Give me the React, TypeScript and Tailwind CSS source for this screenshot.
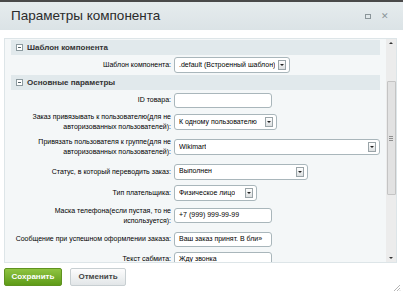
import React from 'react';

type Row =
  | { kind: 'section'; title: string }
  | { kind: 'field'; label: string[]; control: 'input' | 'select'; value: string; width: number; h: number };

const rows: Row[] = [
  { kind: 'section', title: 'Шаблон компонента' },
  { kind: 'field', label: ['Шаблон компонента:'], control: 'select', value: '.default (Встроенный шаблон)', width: 116, h: 20 },
  { kind: 'section', title: 'Основные параметры' },
  { kind: 'field', label: ['ID товара:'], control: 'input', value: '', width: 98, h: 20 },
  {
    kind: 'field',
    label: ['Заказ привязывать к пользователю(для не', 'авторизованных пользователей):'],
    control: 'select',
    value: 'К одному пользователю',
    width: 103,
    h: 24,
  },
  {
    kind: 'field',
    label: ['Привязать пользователя к группе(для не', 'авторизованных пользователей):'],
    control: 'select',
    value: 'Wikimart',
    width: 206,
    h: 26,
  },
  { kind: 'field', label: ['Статус, в который переводить заказ:'], control: 'select', value: 'Выполнен', width: 134, h: 23 },
  { kind: 'field', label: ['Тип плательщика:'], control: 'select', value: 'Физическое лицо', width: 83, h: 20 },
  {
    kind: 'field',
    label: ['Маска телефона(если пустая, то не', 'используется):'],
    control: 'input',
    value: '+7 (999) 999-99-99',
    width: 98,
    h: 25,
  },
  { kind: 'field', label: ['Сообщение при успешном оформлении заказа:'], control: 'input', value: 'Ваш заказ принят. В бли»', width: 98, h: 22 },
  { kind: 'field', label: ['Текст сабмита:'], control: 'input', value: 'Жду звонка', width: 98, h: 18 },
];

function MinusBox() {
  return (
    <span className="flex h-[7px] w-[7px] items-center justify-center border border-[#8c9a9f] bg-white">
      <span className="h-px w-[3px] bg-[#55646a]" />
    </span>
  );
}

function Control({ row }: { row: Extract<Row, { kind: 'field' }> }) {
  if (row.control === 'input') {
    return (
      <div
        className="flex h-[15px] shrink-0 items-center overflow-hidden whitespace-nowrap rounded-[3px] border border-[#a9b6bb] bg-white px-[4px] text-[7px] text-black"
        style={{ width: row.width }}
      >
        {row.value}
      </div>
    );
  }
  return (
    <div
      className="flex h-[16px] shrink-0 items-center justify-between rounded-[3px] border border-[#a9b6bb] bg-white pl-[4px] pr-[3px] text-[7px] text-black"
      style={{ width: row.width }}
    >
      <span className="overflow-hidden whitespace-nowrap">{row.value}</span>
      <span className="flex h-[10px] w-[8px] shrink-0 items-center justify-center border border-[#9aa4a8] bg-gradient-to-b from-[#ffffff] to-[#dcdfe0]">
        <span className="h-0 w-0 border-x-[2px] border-t-[2px] border-x-transparent border-t-[#222]" />
      </span>
    </div>
  );
}

export default function App() {
  return (
    <div className="relative h-[294px] w-[403px] overflow-hidden bg-white font-['Liberation_Sans',Arial,sans-serif]">
      <div className="h-[2px] bg-[#4a4a4a]" />
      <header className="flex h-[28px] items-center justify-between bg-gradient-to-b from-[#e6ecee] to-[#dbe3e6] pl-[11px] pr-[14px]">
        <span className="text-[13.5px] text-[#2b2b2b]">Параметры компонента</span>
        <div className="flex items-center gap-[10px] text-[#8a9599]">
          <span className="h-[5px] w-[6px] border border-[#8a9599]" />
          <span className="text-[9px] leading-none">✕</span>
        </div>
      </header>

      <div className="px-[4px] pt-[8px]">
        <div className="flex h-[225px] w-[393px] border border-[#dde5e8] bg-[#f4f7f8] pl-[6px]">
          <div className="w-[369px] overflow-hidden pt-px">
            {rows.map((row, i) =>
              row.kind === 'section' ? (
                <div key={i} className="flex h-[15px] items-center gap-[4px] bg-[#e1e9ec] pl-[5px]">
                  <MinusBox />
                  <span className="text-[8px] font-bold text-[#333]">{row.title}</span>
                </div>
              ) : (
                <div key={i} className="flex items-center gap-[3px]" style={{ height: row.h }}>
                  <div className="flex w-[160px] shrink-0 flex-col items-end text-right text-[7px] leading-[10px] text-black">
                    {row.label.map((l, j) => (
                      <span key={j} className="whitespace-nowrap">
                        {l}
                      </span>
                    ))}
                  </div>
                  <Control row={row} />
                </div>
              ),
            )}
          </div>

          <div className="ml-[6px] flex w-[10px] flex-col items-center bg-[#ececec] py-[3px]">
            <span className="h-0 w-0 border-x-[2px] border-b-[2px] border-x-transparent border-b-[#333]" />
            <div className="mt-[37px] flex h-[114px] w-[9px] items-center justify-center rounded-[1px] border border-[#c4c4c4] bg-[#e2e2e2]">
              <div className="flex flex-col gap-px">
                <span className="h-px w-[4px] bg-[#8f8f8f]" />
                <span className="h-px w-[4px] bg-[#8f8f8f]" />
                <span className="h-px w-[4px] bg-[#8f8f8f]" />
              </div>
            </div>
            <span className="mt-auto h-0 w-0 border-x-[2px] border-t-[2px] border-x-transparent border-t-[#333]" />
          </div>
        </div>

        <div className="mt-[5px] flex gap-[8px]">
          <button className="h-[18px] w-[58px] rounded-[2px] border border-[#5f9220] bg-gradient-to-b from-[#8fc440] to-[#5e9b16] text-[8px] font-bold text-white">
            Сохранить
          </button>
          <button className="h-[18px] w-[56px] rounded-[2px] border border-[#c8cfd2] bg-gradient-to-b from-[#fdfdfd] to-[#e2e6e8] text-[8px] font-bold text-[#444]">
            Отменить
          </button>
        </div>
      </div>

      <svg className="absolute bottom-[2px] right-[2px]" width="8" height="8" viewBox="0 0 8 8">
        <path d="M7 1L1 7M7 4L4 7M7 6.5L6.5 7" stroke="#b5b5b5" strokeWidth="1" />
      </svg>
    </div>
  );
}
